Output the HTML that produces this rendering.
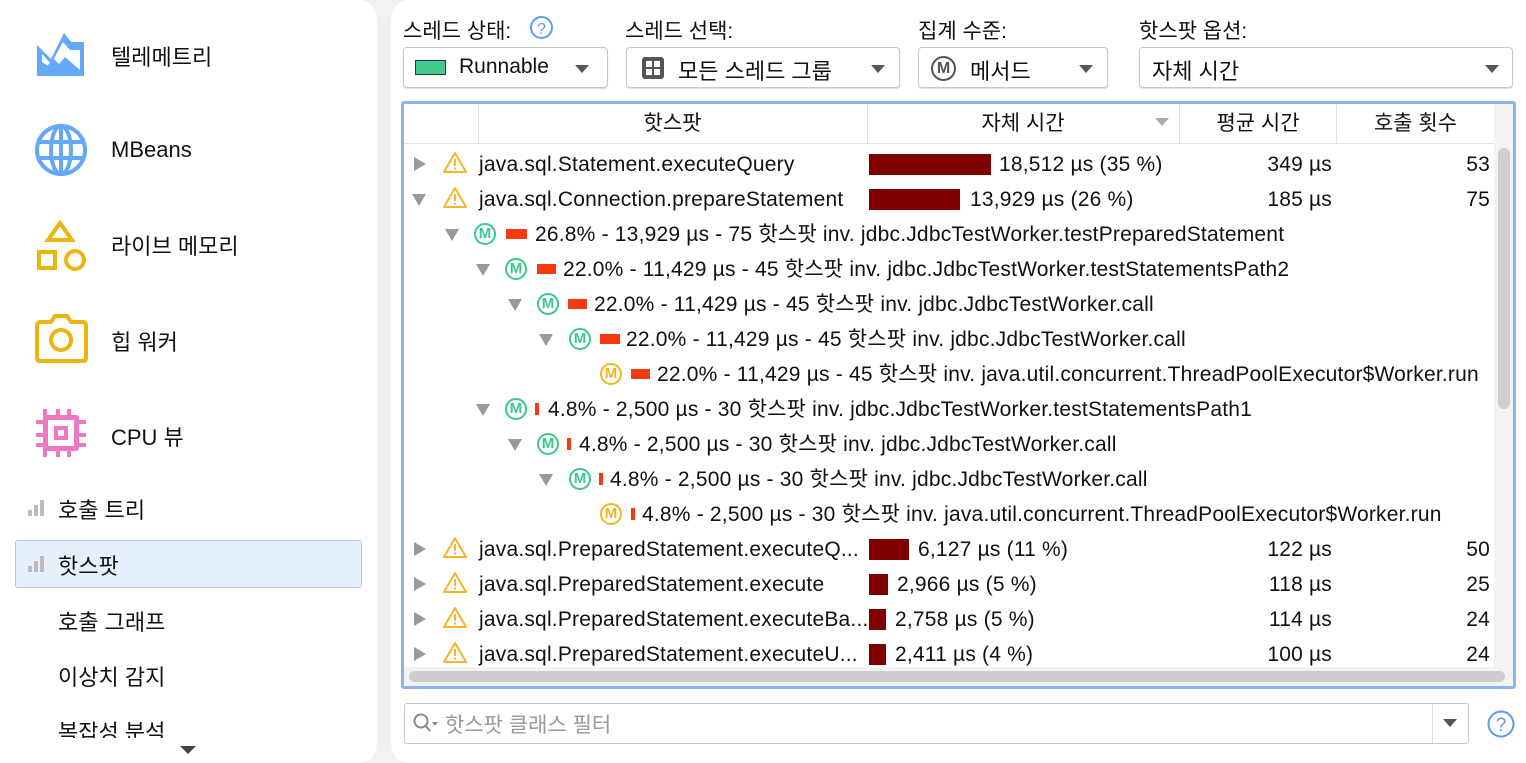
<!DOCTYPE html>
<html><head><meta charset="utf-8"><style>
*{box-sizing:border-box;margin:0;padding:0}
body{width:1526px;height:763px;background:#f2f2f2;font-family:"Liberation Sans","Noto Sans CJK KR",sans-serif;color:#111;position:relative;overflow:hidden;font-size:20px}
.abs{position:absolute;white-space:nowrap}
.panel{position:absolute;background:#fff;border-radius:18px}
.lbl{font-size:20px}
.combo{position:absolute;height:41px;border:1px solid #c8c8c8;border-radius:4px;background:#fff;box-shadow:0 1px 1px #ddd}
.arr{position:absolute;width:0;height:0;border-left:7px solid transparent;border-right:7px solid transparent;border-top:8px solid #555}
.tri-r{position:absolute;width:0;height:0;border-top:7px solid transparent;border-bottom:7px solid transparent;border-left:12px solid #999}
.tri-d{position:absolute;width:0;height:0;border-left:7px solid transparent;border-right:7px solid transparent;border-top:12px solid #999}
.m{position:absolute;width:22px;height:22px;border:2px solid #3cc88a;border-radius:50%;color:#3cc88a;font-size:15px;font-weight:bold;text-align:center;line-height:18px}
.m.o{border-color:#f2b61d;color:#f2b61d}
.rb{position:absolute;height:10px;background:#f53a10}
.db{position:absolute;height:21px;background:#7e0000}
.t{position:absolute;white-space:nowrap;font-size:21px;letter-spacing:0.2px;line-height:26px;margin-top:0px}
.hd{position:absolute;top:104px;height:40px;border-right:1px solid #e2e2e2;text-align:center;line-height:40px;font-size:21px}
.sb{position:absolute;white-space:nowrap;font-size:22px}
</style></head><body>

<div class="panel" style="left:0;top:0;width:377px;height:763px;border-radius:0 18px 18px 0"></div>
<div class="panel" style="left:391px;top:0;width:1135px;height:763px;border-radius:18px 0 0 18px"></div>

<!-- sidebar -->
<svg class="abs" style="left:36px;top:32px" width="50" height="46" viewBox="0 0 50 46"><path d="M1 13 L15 27 L28 1 L35 10 L48 10 L48 44 L1 44 Z" fill="#64a8f8"/><path d="M6 22 L15 32 L27 10 L34 18 L44 18 L44 38 L29 25 L18 38 L6 30 Z" fill="#fff"/><path d="M1 44 L18 27 L29 38 L48 38 L48 44 Z" fill="#64a8f8"/></svg>
<div class="sb" style="left:111px;top:40px">텔레메트리</div>
<svg class="abs" style="left:34px;top:123px" width="54" height="54" viewBox="0 0 54 54"><g fill="none" stroke="#64a8f8" stroke-width="4"><circle cx="27" cy="27" r="24"/><ellipse cx="27" cy="27" rx="10" ry="24"/><line x1="3" y1="19" x2="51" y2="19"/><line x1="3" y1="35" x2="51" y2="35"/><line x1="27" y1="3" x2="27" y2="51"/></g></svg>
<div class="sb" style="left:111px;top:137px">MBeans</div>
<svg class="abs" style="left:36px;top:218px" width="52" height="54" viewBox="0 0 52 54"><g fill="none" stroke="#ecb40e" stroke-width="4"><path d="M24 5 L36 22 L12 22 Z"/><rect x="3" y="34" width="16" height="16"/><circle cx="39" cy="42" r="9"/></g></svg>
<div class="sb" style="left:111px;top:229px">라이브 메모리</div>
<svg class="abs" style="left:34px;top:314px" width="54" height="50" viewBox="0 0 54 50"><g fill="none" stroke="#ecb40e" stroke-width="4"><path d="M3 12 Q3 8 7 8 L17 8 L21 2 L33 2 L37 8 L49 8 Q52 8 52 12 L52 44 Q52 47 49 47 L6 47 Q3 47 3 44 Z"/><circle cx="27" cy="26" r="10"/></g></svg>
<div class="sb" style="left:111px;top:325px">힙 워커</div>
<svg class="abs" style="left:36px;top:409px" width="50" height="48" viewBox="0 0 50 48"><g fill="#f078c0"><rect x="7" y="6" width="36" height="36" rx="3"/><rect x="7" y="0" width="4" height="48"/><rect x="20" y="0" width="4" height="48"/><rect x="31" y="0" width="4" height="48"/><rect x="0" y="11" width="50" height="4"/><rect x="0" y="24" width="50" height="4"/><rect x="0" y="34" width="50" height="4"/></g><rect x="12" y="11" width="26" height="26" fill="#fff"/><rect x="18" y="17" width="14" height="14" fill="#f078c0"/><rect x="22" y="21" width="6" height="6" fill="#fff"/></svg>
<div class="sb" style="left:111px;top:420px">CPU 뷰</div>

<svg class="abs" style="left:28px;top:498px" width="18" height="20"><rect x="0" y="12" width="4" height="6" fill="#bbb"/><rect x="6" y="7" width="4" height="11" fill="#bbb"/><rect x="12" y="2" width="4" height="16" fill="#bbb"/></svg>
<div class="sb" style="left:58px;top:493px">호출 트리</div>
<div class="abs" style="left:15px;top:540px;width:347px;height:48px;background:#e6f0fc;border:1px solid #a8cbf3;border-radius:3px"></div>
<svg class="abs" style="left:28px;top:554px" width="18" height="20"><rect x="0" y="12" width="4" height="6" fill="#bbb"/><rect x="6" y="7" width="4" height="11" fill="#bbb"/><rect x="12" y="2" width="4" height="16" fill="#bbb"/></svg>
<div class="sb" style="left:58px;top:549px">핫스팟</div>
<div class="sb" style="left:58px;top:605px">호출 그래프</div>
<div class="sb" style="left:58px;top:660px">이상치 감지</div>
<div class="sb" style="left:58px;top:715px;height:23px;overflow:hidden">복잡성 분석</div>
<div class="arr" style="left:180px;top:746px;border-left-width:8px;border-right-width:8px;border-top-color:#444"></div>

<!-- top controls -->
<div class="abs lbl" style="left:403px;top:15px;font-size:21px">스레드 상태:</div>
<svg class="abs" style="left:529px;top:15px" width="25" height="25"><circle cx="12.5" cy="12.5" r="10.5" fill="none" stroke="#5a9ef0" stroke-width="2"/><text x="12.5" y="19" font-size="16" text-anchor="middle" fill="#5a9ef0" font-family="Liberation Sans">?</text></svg>
<div class="abs lbl" style="left:625px;top:15px;font-size:21px">스레드 선택:</div>
<div class="abs lbl" style="left:918px;top:15px;font-size:21px">집계 수준:</div>
<div class="abs lbl" style="left:1139px;top:15px;font-size:21px">핫스팟 옵션:</div>

<div class="combo" style="left:403px;top:47px;width:205px"></div>
<div class="abs" style="left:415px;top:60px;width:31px;height:15px;background:#3ecb8c;border:1px solid #333"></div>
<div class="abs" style="left:459px;top:55px;font-size:21px">Runnable</div>
<div class="arr" style="left:575px;top:65px"></div>

<div class="combo" style="left:626px;top:47px;width:274px"></div>
<svg class="abs" style="left:641px;top:56px" width="24" height="24"><rect x="1" y="1" width="22" height="22" rx="3" fill="#555"/><rect x="5" y="5" width="6" height="6" fill="#fff"/><rect x="13" y="5" width="6" height="6" fill="#fff"/><rect x="5" y="13" width="6" height="6" fill="#fff"/><rect x="13" y="13" width="6" height="6" fill="#fff"/></svg>
<div class="abs" style="left:678px;top:54px;font-size:22px">모든 스레드 그룹</div>
<div class="arr" style="left:871px;top:65px"></div>

<div class="combo" style="left:918px;top:47px;width:190px"></div>
<div class="m" style="left:931px;top:56px;width:25px;height:25px;border-color:#555;color:#555;line-height:21px;font-size:16px">M</div>
<div class="abs" style="left:970px;top:54px;font-size:22px">메서드</div>
<div class="arr" style="left:1079px;top:65px"></div>

<div class="combo" style="left:1139px;top:47px;width:374px"></div>
<div class="abs" style="left:1152px;top:54px;font-size:22px">자체 시간</div>
<div class="arr" style="left:1485px;top:65px"></div>

<!-- table -->
<div class="abs" style="left:401px;top:101px;width:1115px;height:588px;border:3px solid #8ab4ee;border-radius:3px;background:#fff"></div>
<div class="abs" style="left:404px;top:143px;width:1090px;height:1px;background:#e2e2e2"></div>
<div class="hd" style="left:404px;width:75px"></div>
<div class="hd" style="left:478px;width:390px">핫스팟</div>
<div class="hd" style="left:867px;width:313px">자체 시간</div>
<div class="arr" style="left:1155px;top:118px;border-top-color:#aaa"></div>
<div class="hd" style="left:1180px;width:157px">평균 시간</div>
<div class="hd" style="left:1337px;width:158px">호출 횟수</div>
<div class="abs" style="left:1494px;top:104px;width:19px;height:563px;background:#f3f3f3"></div>
<div class="abs" style="left:1498px;top:148px;width:12px;height:261px;background:#cdcdcd;border-radius:6px"></div>
<div class="abs" style="left:404px;top:667px;width:1109px;height:19px;background:#f3f3f3"></div>
<div class="abs" style="left:409px;top:671px;width:1096px;height:11px;background:#cdcdcd;border-radius:6px"></div>

<svg width="0" height="0" style="position:absolute"><defs><g id="w"><path d="M12 2 L23 21 L1 21 Z" fill="none" stroke="#f5b52a" stroke-width="2" stroke-linejoin="round"/><rect x="11" y="8" width="2" height="7" fill="#f5b52a"/><rect x="11" y="16.5" width="2" height="2" fill="#f5b52a"/></g></defs></svg>

<!-- row 1 -->
<div class="tri-r" style="left:414px;top:157px"></div>
<svg class="abs" style="left:443px;top:151px" width="24" height="24"><use href="#w"/></svg>
<div class="t" style="left:479px;top:152px">java.sql.Statement.executeQuery</div>
<div class="db" style="left:869px;top:154px;width:122px"></div>
<div class="t" style="left:999px;top:152px">18,512 µs (35 %)</div>
<div class="t" style="left:1180px;top:152px;width:152px;text-align:right">349 µs</div>
<div class="t" style="left:1380px;top:152px;width:110px;text-align:right">53</div>
<!-- row 2 -->
<div class="tri-d" style="left:412px;top:194px"></div>
<svg class="abs" style="left:443px;top:186px" width="24" height="24"><use href="#w"/></svg>
<div class="t" style="left:479px;top:187px">java.sql.Connection.prepareStatement</div>
<div class="db" style="left:869px;top:189px;width:91px"></div>
<div class="t" style="left:970px;top:187px">13,929 µs (26 %)</div>
<div class="t" style="left:1180px;top:187px;width:152px;text-align:right">185 µs</div>
<div class="t" style="left:1380px;top:187px;width:110px;text-align:right">75</div>
<!-- sub rows -->
<div class="tri-d" style="left:445px;top:229px"></div><div class="m" style="left:474px;top:223px">M</div><div class="rb" style="left:506px;top:229px;width:21px"></div><div class="t" style="left:535px;top:222px">26.8% - 13,929 µs - 75 핫스팟 inv. jdbc.JdbcTestWorker.testPreparedStatement</div>
<div class="tri-d" style="left:476px;top:264px"></div><div class="m" style="left:505px;top:258px">M</div><div class="rb" style="left:537px;top:264px;width:19px"></div><div class="t" style="left:563px;top:257px">22.0% - 11,429 µs - 45 핫스팟 inv. jdbc.JdbcTestWorker.testStatementsPath2</div>
<div class="tri-d" style="left:508px;top:299px"></div><div class="m" style="left:537px;top:293px">M</div><div class="rb" style="left:568px;top:299px;width:19px"></div><div class="t" style="left:594px;top:292px">22.0% - 11,429 µs - 45 핫스팟 inv. jdbc.JdbcTestWorker.call</div>
<div class="tri-d" style="left:539px;top:334px"></div><div class="m" style="left:569px;top:328px">M</div><div class="rb" style="left:600px;top:334px;width:20px"></div><div class="t" style="left:626px;top:327px">22.0% - 11,429 µs - 45 핫스팟 inv. jdbc.JdbcTestWorker.call</div>
<div class="m o" style="left:600px;top:363px">M</div><div class="rb" style="left:631px;top:369px;width:19px"></div><div class="t" style="left:657px;top:362px">22.0% - 11,429 µs - 45 핫스팟 inv. java.util.concurrent.ThreadPoolExecutor$Worker.run</div>
<div class="tri-d" style="left:476px;top:404px"></div><div class="m" style="left:505px;top:398px">M</div><div class="rb" style="left:535px;top:403px;width:4px;height:12px"></div><div class="t" style="left:548px;top:397px">4.8% - 2,500 µs - 30 핫스팟 inv. jdbc.JdbcTestWorker.testStatementsPath1</div>
<div class="tri-d" style="left:508px;top:439px"></div><div class="m" style="left:537px;top:433px">M</div><div class="rb" style="left:567px;top:438px;width:4px;height:12px"></div><div class="t" style="left:579px;top:432px">4.8% - 2,500 µs - 30 핫스팟 inv. jdbc.JdbcTestWorker.call</div>
<div class="tri-d" style="left:539px;top:474px"></div><div class="m" style="left:569px;top:468px">M</div><div class="rb" style="left:599px;top:473px;width:4px;height:12px"></div><div class="t" style="left:610px;top:467px">4.8% - 2,500 µs - 30 핫스팟 inv. jdbc.JdbcTestWorker.call</div>
<div class="m o" style="left:600px;top:503px">M</div><div class="rb" style="left:631px;top:508px;width:4px;height:12px"></div><div class="t" style="left:642px;top:502px">4.8% - 2,500 µs - 30 핫스팟 inv. java.util.concurrent.ThreadPoolExecutor$Worker.run</div>
<!-- rows bottom -->
<div class="tri-r" style="left:414px;top:542px"></div><svg class="abs" style="left:443px;top:536px" width="24" height="24"><use href="#w"/></svg>
<div class="t" style="left:479px;top:537px">java.sql.PreparedStatement.executeQ...</div><div class="db" style="left:869px;top:539px;width:40px"></div><div class="t" style="left:918px;top:537px">6,127 µs (11 %)</div><div class="t" style="left:1180px;top:537px;width:152px;text-align:right">122 µs</div><div class="t" style="left:1380px;top:537px;width:110px;text-align:right">50</div>
<div class="tri-r" style="left:414px;top:577px"></div><svg class="abs" style="left:443px;top:571px" width="24" height="24"><use href="#w"/></svg>
<div class="t" style="left:479px;top:572px">java.sql.PreparedStatement.execute</div><div class="db" style="left:869px;top:574px;width:19px"></div><div class="t" style="left:897px;top:572px">2,966 µs (5 %)</div><div class="t" style="left:1180px;top:572px;width:152px;text-align:right">118 µs</div><div class="t" style="left:1380px;top:572px;width:110px;text-align:right">25</div>
<div class="tri-r" style="left:414px;top:612px"></div><svg class="abs" style="left:443px;top:606px" width="24" height="24"><use href="#w"/></svg>
<div class="t" style="left:479px;top:607px">java.sql.PreparedStatement.executeBa...</div><div class="db" style="left:869px;top:609px;width:17px"></div><div class="t" style="left:895px;top:607px">2,758 µs (5 %)</div><div class="t" style="left:1180px;top:607px;width:152px;text-align:right">114 µs</div><div class="t" style="left:1380px;top:607px;width:110px;text-align:right">24</div>
<div class="tri-r" style="left:414px;top:647px"></div><svg class="abs" style="left:443px;top:641px" width="24" height="24"><use href="#w"/></svg>
<div class="t" style="left:479px;top:642px">java.sql.PreparedStatement.executeU...</div><div class="db" style="left:869px;top:644px;width:17px"></div><div class="t" style="left:895px;top:642px">2,411 µs (4 %)</div><div class="t" style="left:1180px;top:642px;width:152px;text-align:right">100 µs</div><div class="t" style="left:1380px;top:642px;width:110px;text-align:right">24</div>

<!-- filter -->
<div class="abs" style="left:404px;top:703px;width:1065px;height:41px;border:1px solid #c8c8c8;border-radius:3px;background:#fff"></div>
<div class="abs" style="left:1432px;top:704px;width:1px;height:39px;background:#ddd"></div>
<div class="arr" style="left:1443px;top:719px;border-top-color:#555"></div>
<svg class="abs" style="left:412px;top:712px" width="30" height="24"><circle cx="9" cy="9" r="6.5" fill="none" stroke="#888" stroke-width="2"/><line x1="13.5" y1="13.5" x2="18" y2="19" stroke="#888" stroke-width="2"/><path d="M20 10 L26 10 L23 14 Z" fill="#888"/></svg>
<div class="abs" style="left:445px;top:709px;color:#999;font-size:21px">핫스팟 클래스 필터</div>
<svg class="abs" style="left:1486px;top:709px" width="30" height="30"><circle cx="15" cy="15" r="12.5" fill="none" stroke="#5a9ef0" stroke-width="2"/><text x="15" y="22" font-size="19" text-anchor="middle" fill="#5a9ef0" font-family="Liberation Sans">?</text></svg>
</body></html>
